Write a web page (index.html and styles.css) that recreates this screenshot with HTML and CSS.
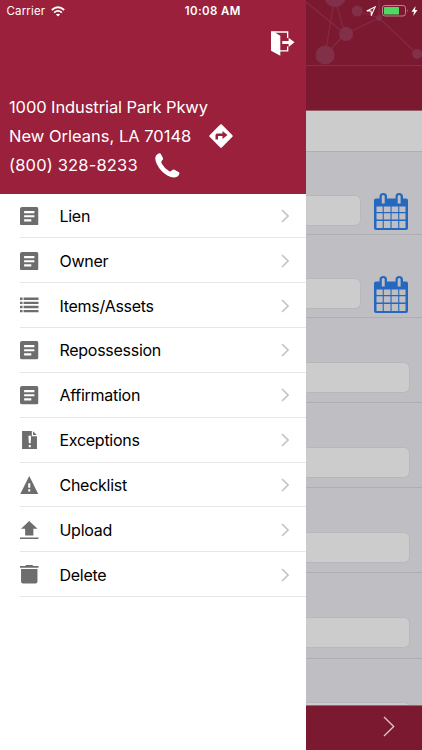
FILE: index.html
```
<!DOCTYPE html>
<html lang="en">
<head>
<meta charset="utf-8">
<title>Menu</title>
<link rel="stylesheet" href="styles.css">
</head>
<body>
<svg class="defs" aria-hidden="true">
  <symbol id="article" viewBox="0 0 18 18"><path fill-rule="evenodd" d="M2 0H16Q18 0 18 2V16Q18 18 16 18H2Q0 18 0 16V2Q0 0 2 0ZM4 4V6H14V4ZM4 8V10H14V8ZM4 12V14H11V12Z"/></symbol>
  <symbol id="chevron" viewBox="0 0 8 14"><path d="M1 1L7 7L1 13" fill="none" stroke="currentColor" stroke-width="1.6"/></symbol>
  <symbol id="calendar" viewBox="0 0 34 37"><path fill-rule="evenodd" d="M2 5.500H5.500V3.500Q5.500 0 9.300 0T13 3.500V5.500H21.500V3.500Q21.500 0 25.200 0T29 3.500V5.500H32Q34 5.500 34 7.500V35Q34 37 32 37H2Q0 37 0 35V7.500Q0 5.500 2 5.500ZM7.800 3.500V10.500H10.700V3.500Q10.700 2 9.200 2T7.800 3.500ZM23.700 3.500V10.500H26.600V3.500Q26.600 2 25.200 2T23.700 3.500ZM2.500 13.500V19H8.700V13.500ZM9.800 13.500V19H16.500V13.500ZM17.600 13.500V19H24.200V13.500ZM25.300 13.500V19H31.500V13.500ZM2.500 20.200V26.500H8.700V20.200ZM9.800 20.200V26.500H16.500V20.200ZM17.600 20.200V26.500H24.200V20.200ZM25.300 20.200V26.500H31.500V20.200ZM2.500 28V35H8.700V28ZM9.800 28V35H16.500V28ZM17.600 28V35H24.200V28ZM25.300 28V35H31.500V28Z"/></symbol>
</svg>
<div class="app">
  <aside class="drawer">
    <header class="profile">
      <div class="toolbar">
        <svg class="exit" viewBox="0 0 24 25"><path d="M2 .8H17V7M17 15.500V20H9" fill="none" stroke="#fff" stroke-width="1.400"/><path d="M0 0H2L9.500 4.500V25L0 20ZM11.500 10H18V6.500L24 11.300L18 16V13H11.500Z" fill="#fff"/></svg>
      </div>
      <div class="line"><span class="street">1000 Industrial Park Pkwy</span></div>
      <div class="line"><span class="city">New Orleans, LA 70148</span>
        <svg class="directions" viewBox="0 0 24 24"><path fill="#fff" fill-rule="evenodd" d="M11.200 .6Q12 -.1 12.800 .6L23.400 11.200Q24.100 12 23.400 12.800L12.800 23.400Q12 24.100 11.200 23.400L.6 12.800Q-.1 12 .6 11.200ZM6.500 15.500H9V12H13.500V15L18.500 11L13.500 7V9.500H8Q6.500 9.500 6.500 11Z"/></svg>
      </div>
      <div class="line"><span class="phone">(800) 328-8233</span>
        <svg class="call" viewBox="0 0 25 25"><path fill="#fff" d="M1.300 2.300Q4 -.7 5.800 .7L8 5.200Q8.300 6.400 7 7.500Q5.800 8.700 6.700 10.500Q9.500 15.700 14.300 18.200Q15.700 19 17 17.300Q18.200 16.200 19.500 16.700L24 19.200Q25.300 21 22.500 23.400Q18.700 26 12.300 22.500Q5.500 18.500 1.800 11Q-1 5.300 1.300 2.300Z"/></svg>
      </div>
    </header>
    <nav class="menu">
      <a class="item"><svg class="icon"><use href="#article"/></svg><span class="label">Lien</span><svg class="chev"><use href="#chevron"/></svg></a>
      <a class="item"><svg class="icon"><use href="#article"/></svg><span class="label">Owner</span><svg class="chev"><use href="#chevron"/></svg></a>
      <a class="item"><svg class="icon" viewBox="0 0 18 18"><path d="M0 1.500H2.500V3.900H0ZM3.500 1.500H18V3.900H3.500ZM0 5.500H2.500V7.900H0ZM3.500 5.500H18V7.900H3.500ZM0 9.500H2.500V11.900H0ZM3.500 9.500H18V11.900H3.500ZM0 13.500H2.500V15.900H0ZM3.500 13.500H18V15.900H3.500Z"/></svg><span class="label">Items/Assets</span><svg class="chev"><use href="#chevron"/></svg></a>
      <a class="item"><svg class="icon"><use href="#article"/></svg><span class="label">Repossession</span><svg class="chev"><use href="#chevron"/></svg></a>
      <a class="item"><svg class="icon"><use href="#article"/></svg><span class="label">Affirmation</span><svg class="chev"><use href="#chevron"/></svg></a>
      <a class="item"><svg class="icon" viewBox="0 0 18 18"><path fill-rule="evenodd" d="M2 0H11.500V5H16.500V18H2ZM8.200 4.500L8.600 12H10.400L10.800 4.500ZM8.500 13.500V15.800H10.500V13.500ZM12.700 .3L16.300 4H12.700Z"/></svg><span class="label">Exceptions</span><svg class="chev"><use href="#chevron"/></svg></a>
      <a class="item"><svg class="icon" viewBox="0 0 18 18"><path fill-rule="evenodd" d="M9 0L18 18H0ZM8 7V11.500H10V7ZM8 13V15H10V13Z"/></svg><span class="label">Checklist</span><svg class="chev"><use href="#chevron"/></svg></a>
      <a class="item"><svg class="icon" viewBox="0 0 18 18"><path d="M9 0L17 7.500H13V14H5V7.500H1ZM0 16H18V18H0Z"/></svg><span class="label">Upload</span><svg class="chev"><use href="#chevron"/></svg></a>
      <a class="item"><svg class="icon" viewBox="0 0 18 18"><path d="M0 1H5L6 0H12L13 1H18V2.700H0ZM1 4H17V16Q17 18 15 18H3Q1 18 1 16Z"/></svg><span class="label">Delete</span><svg class="chev"><use href="#chevron"/></svg></a>
    </nav>
  </aside>
  <main class="page">
    <header class="banner">
      <svg class="network" viewBox="0 0 116 65"><g stroke="#852a43" stroke-width="1.200" fill="none"><path d="M0 2L39 34L73 18L111 54M29 0L39 34L19 55L28 0M51 11L73 18V0"/></g><g fill="#82304a"><circle cx="29" cy="-4" r="11"/><circle cx="19" cy="55" r="9.500"/><circle cx="40" cy="34" r="7"/><circle cx="51" cy="11" r="5.500"/><circle cx="73" cy="18" r="3"/><circle cx="111" cy="54" r="5"/></g></svg>
    </header>
    <div class="strip"></div>
    <div class="form">
      <div class="row dated"><span class="field"></span><svg class="cal"><use href="#calendar"/></svg></div>
      <div class="row dated second"><span class="field"></span><svg class="cal"><use href="#calendar"/></svg></div>
      <div class="row"><span class="field"></span></div>
      <div class="row"><span class="field"></span></div>
      <div class="row"><span class="field"></span></div>
      <div class="row"><span class="field"></span></div>
      <div class="row"><span class="field"></span></div>
    </div>
    <footer class="footer"><svg class="next" viewBox="0 0 12 21"><path d="M1 1L10.700 10.500L1 20" fill="none" stroke="#e4c5cd" stroke-width="1.300"/></svg></footer>
  </main>
</div>
<div class="status">
  <div class="carrier"><span class="carrier-name">Carrier</span>
    <svg class="wifi" viewBox="0 0 14 11"><path d="M.8 4Q7 -1.500 13.200 4M3.100 6.600Q7 3.200 10.900 6.600" fill="none" stroke="#fff" stroke-width="1.800"/><path d="M4.900 8.500Q7 6.800 9.100 8.500L7 10.600Z" fill="#fff"/></svg>
  </div>
  <span class="time">10:08 AM</span>
  <div class="power">
    <svg class="locate" viewBox="0 0 10 10"><path d="M.8 4.900L9.200 .8L5.400 9.200L5 5Z" fill="none" stroke="#fff" stroke-width="1.100"/></svg>
    <svg class="battery" viewBox="0 0 27 12"><rect x=".5" y=".5" width="23" height="10.500" rx="2.500" fill="none" stroke="#b8848f"/><rect x="2" y="2" width="15" height="7.500" rx=".7" fill="#4cd964"/><path d="M25 4Q26.500 5.700 25 7.500Z" fill="#b8848f"/></svg>
    <svg class="bolt" viewBox="0 0 6 10"><path d="M4 0L0 5.700H2.500L1.700 10L6 4H3.500Z" fill="#fff"/></svg>
  </div>
</div>
</body>
</html>
```
FILE: styles.css
```
* { box-sizing: border-box; }
body { margin: 0; font-family: Inter, "Liberation Sans", sans-serif; background: #fff; }
svg { display: block; flex: none; }
.defs { position: absolute; width: 0; height: 0; }
.app { display: grid; grid-template-columns: 305.700px 1fr; width: 422px; height: 750px; overflow: hidden; }

.drawer { background: #fff; }
.profile { height: 193.500px; background: #9a203c; color: #fff; padding-left: 9px; }
.toolbar { height: 92.500px; padding: 31px 11px 0 0; display: flex; justify-content: flex-end; }
.exit { width: 23.500px; height: 25px; }
.line { height: 29px; display: flex; align-items: center; font-size: 16.500px; white-space: nowrap; }
.street { letter-spacing: -.1px; }
.city { letter-spacing: 0; }
.phone { letter-spacing: .17px; }
.directions { width: 24px; height: 24px; margin: -1px 73px 0 auto; }
.call { width: 25px; height: 25px; margin-left: auto; margin-right: 126px; }

.menu { padding-left: 20.300px; }
.item { height: 44.850px; padding-top: 1px; display: flex; align-items: center; border-bottom: 1px solid #e6e6e8; color: #000; }
.icon { width: 18.500px; height: 18.500px; fill: #6d6d6d; }
.label { margin-left: 20.700px; font-size: 16px; letter-spacing: -.27px; flex: 1; }
.chev { width: 8px; height: 14px; margin-right: 16.500px; color: #c3c3c8; }

.page { display: flex; flex-direction: column; height: 750px; background: #bebec3; min-width: 0; }
.banner { height: 110.500px; flex: none; background: #7a1930; border-bottom: 1px solid #92606d; }
.network { width: 116.300px; height: 66px; border-bottom: 1px solid #882d43; }
.strip { height: 41px; flex: none; background: #ccc; border-bottom: 1px solid #afafb3; }
.form { flex: 1; overflow: hidden; }
.row { height: 85.150px; padding-top: 43.500px; border-bottom: 1px solid #aeaeb3; }
.field { display: block; width: 104px; height: 31px; background: #ccc; border: 1px solid #b8b8bc; border-left: 0; border-radius: 0 6px 6px 0; }
.dated { display: flex; height: 83px; }
.dated .field { width: 55px; }
.dated.second { height: 83.500px; }
.cal { width: 34px; height: 37px; fill: #2468bf; margin: -2.500px 0 0 13.500px; }
.footer { height: 45.500px; flex: none; background: #7a1930; border-top: 1px solid #9b6271; display: flex; align-items: center; justify-content: flex-end; padding: 0 27px 2px 0; }
.next { width: 12px; height: 21px; }

.status { position: absolute; top: 0; left: 0; width: 422px; height: 22px; padding: 0 4px 0 6.500px; display: grid; grid-template-columns: 1fr auto 1fr; align-items: center; color: #fff; font-size: 11.500px; }
.carrier { display: flex; align-items: center; gap: 6px; letter-spacing: .15px; }
.wifi { width: 14px; height: 11px; }
.time { font-weight: 600; letter-spacing: .4px; padding-left: 1px; }
.power { display: flex; align-items: center; justify-content: flex-end; }
.locate { width: 10px; height: 10px; margin-right: 6.500px; }
.battery { width: 27px; height: 12px; margin-right: 2px; }
.bolt { width: 7px; height: 10px; }
```
